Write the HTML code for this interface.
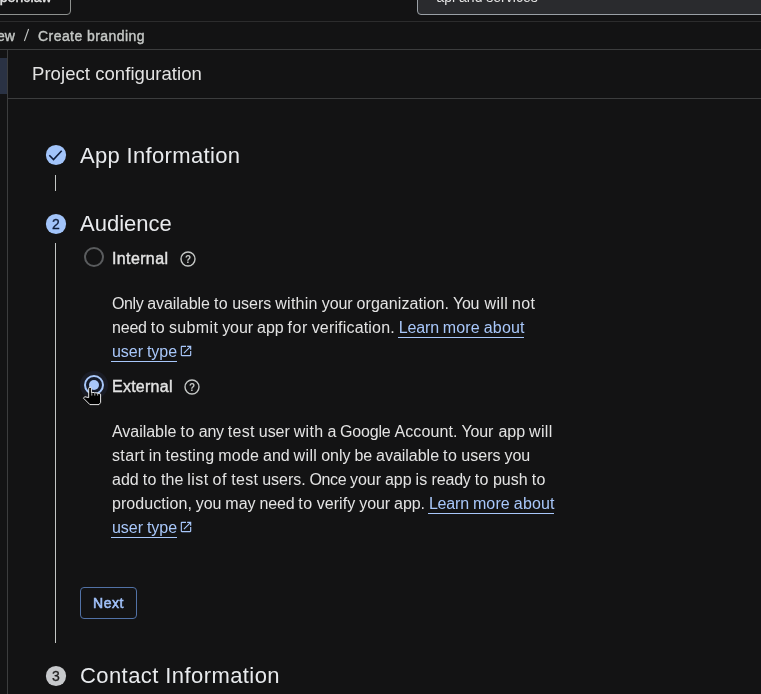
<!DOCTYPE html>
<html><head><meta charset="utf-8">
<style>
html,body{margin:0;padding:0;}
body{width:761px;height:694px;overflow:hidden;background:#131314;position:relative;font-family:"Liberation Sans",sans-serif;color:#e3e3e3;}
#root{position:absolute;left:0;top:0;width:761px;height:694px;will-change:transform;overflow:hidden;}
.abs{position:absolute;}
.hl{position:absolute;height:1px;left:0;right:0;}
.t{position:absolute;white-space:nowrap;line-height:1;}
.h{font-size:22px;color:#e8eaed;}
.p{font-size:16px;color:#e3e3e3;}
.m{-webkit-text-stroke:0.4px currentColor;}
</style></head><body><div id="root">
<!-- top bar -->
<div class="abs" style="left:-10px;top:-20px;width:79px;height:33px;border:1px solid #8e918f;border-radius:4px;"></div>
<div class="t m" style="left:-8.2px;top:-10px;font-size:14px;color:#e3e3e3;letter-spacing:0.1px;" id="oc">openclaw</div>
<div class="abs" style="left:417px;top:-20px;width:400px;height:33px;border:1px solid #9aa0a6;border-radius:4px;background:#2a2b2e;"></div>
<div class="t" style="left:436.5px;top:-10px;font-size:14px;color:#e3e3e3;" id="sv">api and services</div>
<div class="hl" style="top:21px;background:#2c2c2d;"></div>
<div class="hl" style="top:49px;background:#3c3d3e;"></div>
<div class="hl" style="top:98px;left:8px;background:#3c3d3e;"></div>
<!-- sidebar -->
<div class="abs" style="left:0;top:58px;width:7px;height:36px;background:#2a3244;"></div>
<div class="abs" style="left:7px;top:50px;width:1px;height:650px;background:#3c3d3e;"></div>
<!-- breadcrumb -->
<div class="t m" id="bc1" style="left:-3px;top:29px;font-size:14px;color:#c4c7c5;">ew</div>
<svg class="abs" style="left:20px;top:26px" width="14" height="18" viewBox="0 0 14 18"><path d="M4.4 15 L8.6 3" stroke="#c4c7c5" stroke-width="1.1" fill="none"/></svg>
<div class="t m" id="bc3" style="left:38px;top:29px;font-size:14px;color:#c4c7c5;letter-spacing:0.44px;">Create branding</div>
<div class="t" id="pc" style="left:32px;top:65px;font-size:18.5px;color:#e3e3e3;letter-spacing:0.06px;">Project configuration</div>
<!-- step 1 -->
<svg class="abs" style="left:46px;top:145px;overflow:visible" width="20" height="20" viewBox="0 0 20 20"><circle cx="10" cy="10" r="10.1" fill="#a2c4fa"/><path d="M3.3 10.3 L7.5 14.5 L15.7 5.7" fill="none" stroke="#0f1d3a" stroke-width="1.6"/></svg>
<div class="t h" id="h1" style="left:80px;top:145px;letter-spacing:0.33px;">App Information</div>
<div class="abs" style="left:55px;top:175px;width:1px;height:16px;background:#c4c7c5;"></div>
<!-- step 2 -->
<svg class="abs" style="left:46px;top:214px;overflow:visible" width="20" height="20" viewBox="0 0 20 20"><circle cx="10" cy="10" r="10.1" fill="#a2c4fa"/></svg>
<div class="t m" style="left:46px;top:217px;width:20px;text-align:center;font-size:14px;color:#0f1d3a;-webkit-text-stroke-width:0.3px;">2</div>
<div class="t h" id="h2" style="left:80px;top:213px;">Audience</div>
<div class="abs" style="left:55px;top:243px;width:1px;height:400px;background:#c4c7c5;"></div>
<!-- radio internal -->
<div class="abs" style="left:84px;top:247px;width:16px;height:16px;border:2px solid #5a5c5e;border-radius:50%;"></div>
<div class="t m" id="r1" style="left:112px;top:251px;font-size:16px;color:#e3e3e3;letter-spacing:0.37px;">Internal</div>
<svg class="abs" style="left:180px;top:251px" width="16" height="16" viewBox="0 0 16 16"><circle cx="8" cy="8" r="7" fill="none" stroke="#c4c7c5" stroke-width="1.4"/><text x="8" y="11.5" font-size="10" font-weight="bold" text-anchor="middle" fill="#c4c7c5" font-family="Liberation Sans">?</text></svg>
<svg class="abs" style="left:179px;top:344px" width="14" height="14" viewBox="0 0 24 24"><path fill="#a8c7fa" d="M19 19H5V5h7V3H5c-1.11 0-2 .9-2 2v14c0 1.1.89 2 2 2h14c1.1 0 2-.9 2-2v-7h-2v7zM14 3v2h3.59l-9.83 9.83 1.41 1.41L19 6.41V10h2V3h-7z"/></svg>
<!-- radio external -->
<div class="abs" style="left:80px;top:371px;width:28px;height:28px;border-radius:50%;background:#1a1c25;"></div>
<div class="abs" style="left:84px;top:375px;width:16px;height:16px;border:2px solid #a8c7fa;border-radius:50%;background:#151b2b;"></div>
<div class="abs" style="left:89px;top:380px;width:10px;height:10px;background:#a8c7fa;border-radius:50%;"></div>
<div class="t m" id="r2" style="left:112px;top:379px;font-size:16px;color:#e3e3e3;letter-spacing:0.25px;">External</div>
<svg class="abs" style="left:184px;top:379px" width="16" height="16" viewBox="0 0 16 16"><circle cx="8" cy="8" r="7" fill="none" stroke="#c4c7c5" stroke-width="1.4"/><text x="8" y="11.5" font-size="10" font-weight="bold" text-anchor="middle" fill="#c4c7c5" font-family="Liberation Sans">?</text></svg>
<!-- cursor -->
<svg class="abs" style="left:82px;top:386px" width="21" height="21" viewBox="0 0 21 21"><path d="M6.7 2.5 Q6.7 1.2 8.05 1.2 Q9.4 1.2 9.4 2.5 L9.4 6.7 Q10.8 6.1 12.5 6.7 Q13.9 6.6 15.3 7.2 Q17 7.2 18.6 8.2 L18.6 16.5 L17 18.6 L7.9 18.6 L1.5 12.2 L2.7 10.7 L6.7 11.6 Z" fill="#000" stroke="#fff" stroke-width="0.9" stroke-linejoin="round"/><path d="M9.8 7.2V9.6M12.8 7.2V9.6M15.7 7.8V9.6" stroke="#fff" stroke-width="0.7" fill="none"/></svg>
<div class="t p" style="left:112.00px;top:296px;letter-spacing:-0.424px;">Only</div>
<div class="t p" style="left:147.15px;top:296px;letter-spacing:-0.039px;">available</div>
<div class="t p" style="left:213.91px;top:296px;letter-spacing:0.486px;">to</div>
<div class="t p" style="left:232.17px;top:296px;letter-spacing:-0.003px;">users</div>
<div class="t p" style="left:275.24px;top:296px;letter-spacing:0.273px;">within</div>
<div class="t p" style="left:321.73px;top:296px;letter-spacing:-0.068px;">your</div>
<div class="t p" style="left:356.53px;top:296px;letter-spacing:0.076px;">organization.</div>
<div class="t p" style="left:453.09px;top:296px;letter-spacing:-0.328px;">You</div>
<div class="t p" style="left:484.52px;top:296px;letter-spacing:0.346px;">will</div>
<div class="t p" style="left:512.08px;top:296px;letter-spacing:0.293px;">not</div>
<div class="t p" style="left:112.00px;top:320px;letter-spacing:-0.204px;">need</div>
<div class="t p" style="left:150.74px;top:320px;letter-spacing:0.499px;">to</div>
<div class="t p" style="left:169.04px;top:320px;letter-spacing:0.337px;">submit</div>
<div class="t p" style="left:222.14px;top:320px;letter-spacing:-0.054px;">your</div>
<div class="t p" style="left:257.00px;top:320px;letter-spacing:-0.019px;">app</div>
<div class="t p" style="left:287.60px;top:320px;letter-spacing:0.469px;">for</div>
<div class="t p" style="left:311.64px;top:320px;letter-spacing:0.179px;">verification.</div>
<div class="t p" style="left:398.85px;top:320px;letter-spacing:-0.184px;color:#a8c7fa;">Learn</div>
<div class="t p" style="left:442.81px;top:320px;letter-spacing:0.140px;color:#a8c7fa;">more</div>
<div class="t p" style="left:483.78px;top:320px;letter-spacing:0.157px;color:#a8c7fa;">about</div>
<div class="abs" style="left:398.1px;top:337px;width:126.2px;height:1px;background:#a8c7fa;"></div>
<div class="t p" style="left:112.00px;top:344px;letter-spacing:-0.050px;color:#a8c7fa;">user</div>
<div class="t p" style="left:146.88px;top:344px;letter-spacing:-0.006px;color:#a8c7fa;">type</div>
<div class="abs" style="left:111.3px;top:361px;width:65.5px;height:1px;background:#a8c7fa;"></div>
<div class="t p" style="left:112.00px;top:424px;letter-spacing:-0.043px;">Available</div>
<div class="t p" style="left:180.49px;top:424px;letter-spacing:0.486px;">to</div>
<div class="t p" style="left:198.76px;top:424px;letter-spacing:-0.252px;">any</div>
<div class="t p" style="left:227.75px;top:424px;letter-spacing:0.331px;">test</div>
<div class="t p" style="left:258.81px;top:424px;letter-spacing:-0.060px;">user</div>
<div class="t p" style="left:293.65px;top:424px;letter-spacing:0.353px;">with</div>
<div class="t p" style="left:327.47px;top:424px;letter-spacing:-0.216px;">a</div>
<div class="t p" style="left:340.10px;top:424px;letter-spacing:-0.205px;">Google</div>
<div class="t p" style="left:394.41px;top:424px;letter-spacing:0.123px;">Account.</div>
<div class="t p" style="left:461.61px;top:424px;letter-spacing:-0.227px;">Your</div>
<div class="t p" style="left:498.45px;top:424px;letter-spacing:-0.035px;">app</div>
<div class="t p" style="left:528.99px;top:424px;letter-spacing:0.347px;">will</div>
<div class="t p" style="left:112.00px;top:448px;letter-spacing:0.346px;">start</div>
<div class="t p" style="left:148.81px;top:448px;letter-spacing:0.134px;">in</div>
<div class="t p" style="left:165.50px;top:448px;letter-spacing:0.253px;">testing</div>
<div class="t p" style="left:218.37px;top:448px;letter-spacing:0.165px;">mode</div>
<div class="t p" style="left:263.02px;top:448px;letter-spacing:-0.039px;">and</div>
<div class="t p" style="left:293.57px;top:448px;letter-spacing:0.367px;">will</div>
<div class="t p" style="left:321.21px;top:448px;letter-spacing:0.020px;">only</div>
<div class="t p" style="left:354.61px;top:448px;letter-spacing:-0.164px;">be</div>
<div class="t p" style="left:376.04px;top:448px;letter-spacing:-0.016px;">available</div>
<div class="t p" style="left:443.02px;top:448px;letter-spacing:0.510px;">to</div>
<div class="t p" style="left:461.35px;top:448px;letter-spacing:0.024px;">users</div>
<div class="t p" style="left:504.56px;top:448px;letter-spacing:-0.086px;">you</div>
<div class="t p" style="left:112.00px;top:472px;letter-spacing:0.003px;">add</div>
<div class="t p" style="left:142.66px;top:472px;letter-spacing:0.492px;">to</div>
<div class="t p" style="left:160.94px;top:472px;letter-spacing:0.078px;">the</div>
<div class="t p" style="left:187.37px;top:472px;letter-spacing:0.413px;">list</div>
<div class="t p" style="left:212.53px;top:472px;letter-spacing:0.655px;">of</div>
<div class="t p" style="left:231.14px;top:472px;letter-spacing:0.336px;">test</div>
<div class="t p" style="left:262.23px;top:472px;letter-spacing:-0.037px;">users.</div>
<div class="t p" style="left:309.53px;top:472px;letter-spacing:-0.406px;">Once</div>
<div class="t p" style="left:350.10px;top:472px;letter-spacing:-0.062px;">your</div>
<div class="t p" style="left:384.93px;top:472px;letter-spacing:-0.028px;">app</div>
<div class="t p" style="left:415.50px;top:472px;letter-spacing:0.279px;">is</div>
<div class="t p" style="left:431.56px;top:472px;letter-spacing:-0.181px;">ready</div>
<div class="t p" style="left:474.64px;top:472px;letter-spacing:0.492px;">to</div>
<div class="t p" style="left:492.92px;top:472px;letter-spacing:0.026px;">push</div>
<div class="t p" style="left:531.67px;top:472px;letter-spacing:0.492px;">to</div>
<div class="t p" style="left:112.00px;top:496px;letter-spacing:0.067px;">production,</div>
<div class="t p" style="left:195.86px;top:496px;letter-spacing:-0.097px;">you</div>
<div class="t p" style="left:225.33px;top:496px;letter-spacing:0.019px;">may</div>
<div class="t p" style="left:259.57px;top:496px;letter-spacing:-0.201px;">need</div>
<div class="t p" style="left:298.32px;top:496px;letter-spacing:0.501px;">to</div>
<div class="t p" style="left:316.63px;top:496px;letter-spacing:0.068px;">verify</div>
<div class="t p" style="left:359.22px;top:496px;letter-spacing:-0.052px;">your</div>
<div class="t p" style="left:394.09px;top:496px;letter-spacing:-0.072px;">app.</div>
<div class="t p" style="left:428.91px;top:496px;letter-spacing:-0.181px;color:#a8c7fa;">Learn</div>
<div class="t p" style="left:472.88px;top:496px;letter-spacing:0.143px;color:#a8c7fa;">more</div>
<div class="t p" style="left:513.87px;top:496px;letter-spacing:0.159px;color:#a8c7fa;">about</div>
<div class="abs" style="left:428.2px;top:513px;width:126.2px;height:1px;background:#a8c7fa;"></div>
<div class="t p" style="left:112.00px;top:520px;letter-spacing:-0.050px;color:#a8c7fa;">user</div>
<div class="t p" style="left:146.88px;top:520px;letter-spacing:-0.006px;color:#a8c7fa;">type</div>
<div class="abs" style="left:111.3px;top:537px;width:65.5px;height:1px;background:#a8c7fa;"></div>
<svg class="abs" style="left:179px;top:520px" width="14" height="14" viewBox="0 0 24 24"><path fill="#a8c7fa" d="M19 19H5V5h7V3H5c-1.11 0-2 .9-2 2v14c0 1.1.89 2 2 2h14c1.1 0 2-.9 2-2v-7h-2v7zM14 3v2h3.59l-9.83 9.83 1.41 1.41L19 6.41V10h2V3h-7z"/></svg>
<!-- button -->
<div class="abs" style="left:80px;top:587px;width:55px;height:30px;border:1px solid #5272a6;border-radius:4px;"></div>
<div class="t" id="nx" style="left:93px;top:596px;font-size:14px;color:#a0c0f8;letter-spacing:0.55px;-webkit-text-stroke:0.55px #a0c0f8;">Next</div>
<!-- step 3 -->
<svg class="abs" style="left:46px;top:666px;overflow:visible" width="20" height="20" viewBox="0 0 20 20"><circle cx="10" cy="10" r="10.1" fill="#c7c9cc"/></svg>
<div class="t m" style="left:46px;top:669px;width:20px;text-align:center;font-size:14px;color:#1f1f1f;-webkit-text-stroke-width:0.3px;">3</div>
<div class="t h" id="h3" style="left:80px;top:665px;letter-spacing:0.42px;">Contact Information</div>
</div></body></html>
